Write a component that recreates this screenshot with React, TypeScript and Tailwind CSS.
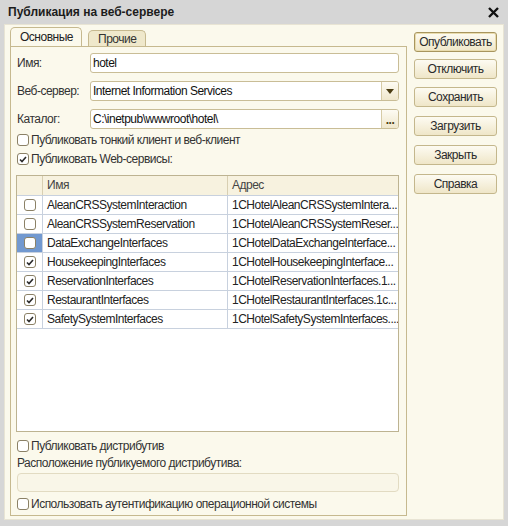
import type { ReactNode } from "react";

type Row = { name: string; addr: string; on: boolean; selected?: boolean };

const rows: Row[] = [
  { name: "AleanCRSSystemInteraction", addr: "1CHotelAleanCRSSystemIntera...", on: false },
  { name: "AleanCRSSystemReservation", addr: "1CHotelAleanCRSSystemReser...", on: false },
  { name: "DataExchangeInterfaces", addr: "1CHotelDataExchangeInterface...", on: false, selected: true },
  { name: "HousekeepingInterfaces", addr: "1CHotelHousekeepingInterface...", on: true },
  { name: "ReservationInterfaces", addr: "1CHotelReservationInterfaces.1...", on: true },
  { name: "RestaurantInterfaces", addr: "1CHotelRestaurantInterfaces.1c...", on: true },
  { name: "SafetySystemInterfaces", addr: "1CHotelSafetySystemInterfaces....", on: true },
];

const buttons = [
  { label: "Опубликовать", cls: "mt-0 border-[#a8955e] shadow-[inset_0_0_0_1px_#e9dcae]" },
  { label: "Отключить", cls: "mt-[7px] border-[#c4b78c]" },
  { label: "Сохранить", cls: "mt-[8px] border-[#c4b78c]" },
  { label: "Загрузить", cls: "mt-[9px] border-[#c4b78c]" },
  { label: "Закрыть", cls: "mt-[9px] border-[#c4b78c]" },
  { label: "Справка", cls: "mt-[9px] border-[#c4b78c]" },
];

function Box({ checked }: { checked: boolean }) {
  return (
    <span className="w-[12px] h-[12px] shrink-0 rounded-[3px] border border-[#8b8166] bg-white flex items-center justify-center">
      {checked && (
        <svg width="8" height="7" viewBox="0 0 8 7">
          <path d="M1 3.5 L3 5.5 L7 1" fill="none" stroke="#2a2a2a" strokeWidth="1.6" />
        </svg>
      )}
    </span>
  );
}

function Check({ checked, children, className }: { checked: boolean; children: ReactNode; className?: string }) {
  return (
    <div className={`h-[16px] flex items-center gap-[2px] ${className ?? ""}`}>
      <Box checked={checked} />
      <span>{children}</span>
    </div>
  );
}

function Field({ label, value, tail, className }: { label: string; value: string; tail?: ReactNode; className?: string }) {
  return (
    <div className={`flex items-center ${className ?? ""}`}>
      <span className="w-[73px] shrink-0 whitespace-nowrap">{label}</span>
      <div className="flex-1 h-[20px] rounded-[3px] border border-[#c9bd96] bg-white flex overflow-hidden">
        <span className="flex-1 pl-[2px] leading-[18px] text-[#111]">{value}</span>
        {tail}
      </div>
    </div>
  );
}

const tailCls =
  "w-[17px] shrink-0 border-l border-[#d6cba6] bg-gradient-to-b from-[#fdfbf3] to-[#efe7cc] flex items-center justify-center";

export default function App() {
  return (
    <div className="w-[508px] h-[526px] bg-[#d6d6d6] flex flex-col font-['Liberation_Sans',Arial,sans-serif] text-[12px] tracking-[-0.5px] text-[#333]">
      <div className="h-[24px] shrink-0 flex items-center justify-between pl-[8px] pr-[9px]">
        <span className="font-bold tracking-normal text-[#1c1c1c]">Публикация на веб-сервере</span>
        <svg width="11" height="11" viewBox="0 0 11 11">
          <path d="M1 1 L10 10 M10 1 L1 10" stroke="#111" strokeWidth="2.4" />
        </svg>
      </div>

      <div className="flex-1 mx-[4px] mb-[6px] bg-[#fbf9ec] border border-[#e8e4d4] flex pl-[5px] pt-[3px]">
        <div className="w-[397px] flex flex-col pb-[3px]">
          {/* tabs */}
          <div className="h-[18px] flex items-end relative z-10">
            <div className="h-[19px] w-[72px] rounded-t-[5px] border border-b-0 border-[#c6b98f] bg-[#fbf9ec] pl-[9px] leading-[18px] text-[#222]">
              Основные
            </div>
            <div className="ml-[6px] h-[16px] w-[58px] rounded-t-[5px] border border-b-0 border-[#c6b98f] bg-[#efe8cb] pl-[9px] leading-[16px] text-[#333]">
              Прочие
            </div>
          </div>

          <div className="flex-1 border border-[#c6b98f] pl-[6px] pr-[7px] pt-[6px] flex flex-col">
            <Field label="Имя:" value="hotel" />
            <Field
              label="Веб-сервер:"
              value="Internet Information Services"
              className="mt-[8px]"
              tail={
                <span className={tailCls}>
                  <svg width="8" height="5" viewBox="0 0 8 5">
                    <path d="M0 0 H8 L4 5 Z" fill="#4a3c12" />
                  </svg>
                </span>
              }
            />
            <Field
              label="Каталог:"
              value="C:\inetpub\wwwroot\hotel\"
              className="mt-[8px]"
              tail={<span className={`${tailCls} text-[#4a3c12] font-bold leading-[10px] items-end pb-[3px]`}>...</span>}
            />

            <Check checked={false} className="mt-[3px]">Публиковать тонкий клиент и веб-клиент</Check>
            <Check checked className="mt-[3px]">Публиковать Web-сервисы:</Check>

            {/* web services table */}
            <div className="mt-[8px] -ml-[1px] h-[257px] border border-[#bdb391] bg-white flex flex-col">
              <div className="h-[20px] shrink-0 flex bg-[#f7f2df] border-b border-[#c8d1de]">
                <div className="w-[26px] border-r border-[#d8cfb2]" />
                <div className="w-[185px] border-r border-[#d8cfb2] pl-[4px] leading-[19px] text-[#444]">Имя</div>
                <div className="flex-1 pl-[4px] leading-[19px] text-[#444]">Адрес</div>
              </div>
              {rows.map((r) => (
                <div key={r.name} className="h-[19px] shrink-0 flex border-b border-[#c8d1de]">
                  <div
                    className={`w-[26px] border-r border-[#c8d1de] flex items-center justify-center ${
                      r.selected ? "bg-[#7299d0]" : ""
                    }`}
                  >
                    <Box checked={r.on} />
                  </div>
                  <div className="w-[185px] border-r border-[#c8d1de] pl-[4px] leading-[18px] text-[#222] whitespace-nowrap overflow-hidden">
                    {r.name}
                  </div>
                  <div className="flex-1 pl-[4px] leading-[18px] text-[#222] whitespace-nowrap overflow-hidden">
                    {r.addr}
                  </div>
                </div>
              ))}
            </div>

            <Check checked={false} className="mt-[6px]">Публиковать дистрибутив</Check>
            <div className="h-[16px] leading-[16px] mt-[1px]">Расположение публикуемого дистрибутива:</div>
            <div className="mt-[2px] h-[19px] rounded-[4px] border border-[#e2dbc2] bg-[#f9f6e8]" />
            <Check checked={false} className="mt-[4px]">Использовать аутентификацию операционной системы</Check>
          </div>
        </div>

        <div className="ml-[7px] w-[83px] pt-[4px] flex flex-col">
          {buttons.map((b) => (
            <div
              key={b.label}
              className={`h-[20px] rounded-[3px] border bg-gradient-to-b from-[#fdfbf2] to-[#efe6c8] text-center leading-[18px] text-[#2a2a2a] ${b.cls}`}
            >
              {b.label}
            </div>
          ))}
        </div>
      </div>
    </div>
  );
}
